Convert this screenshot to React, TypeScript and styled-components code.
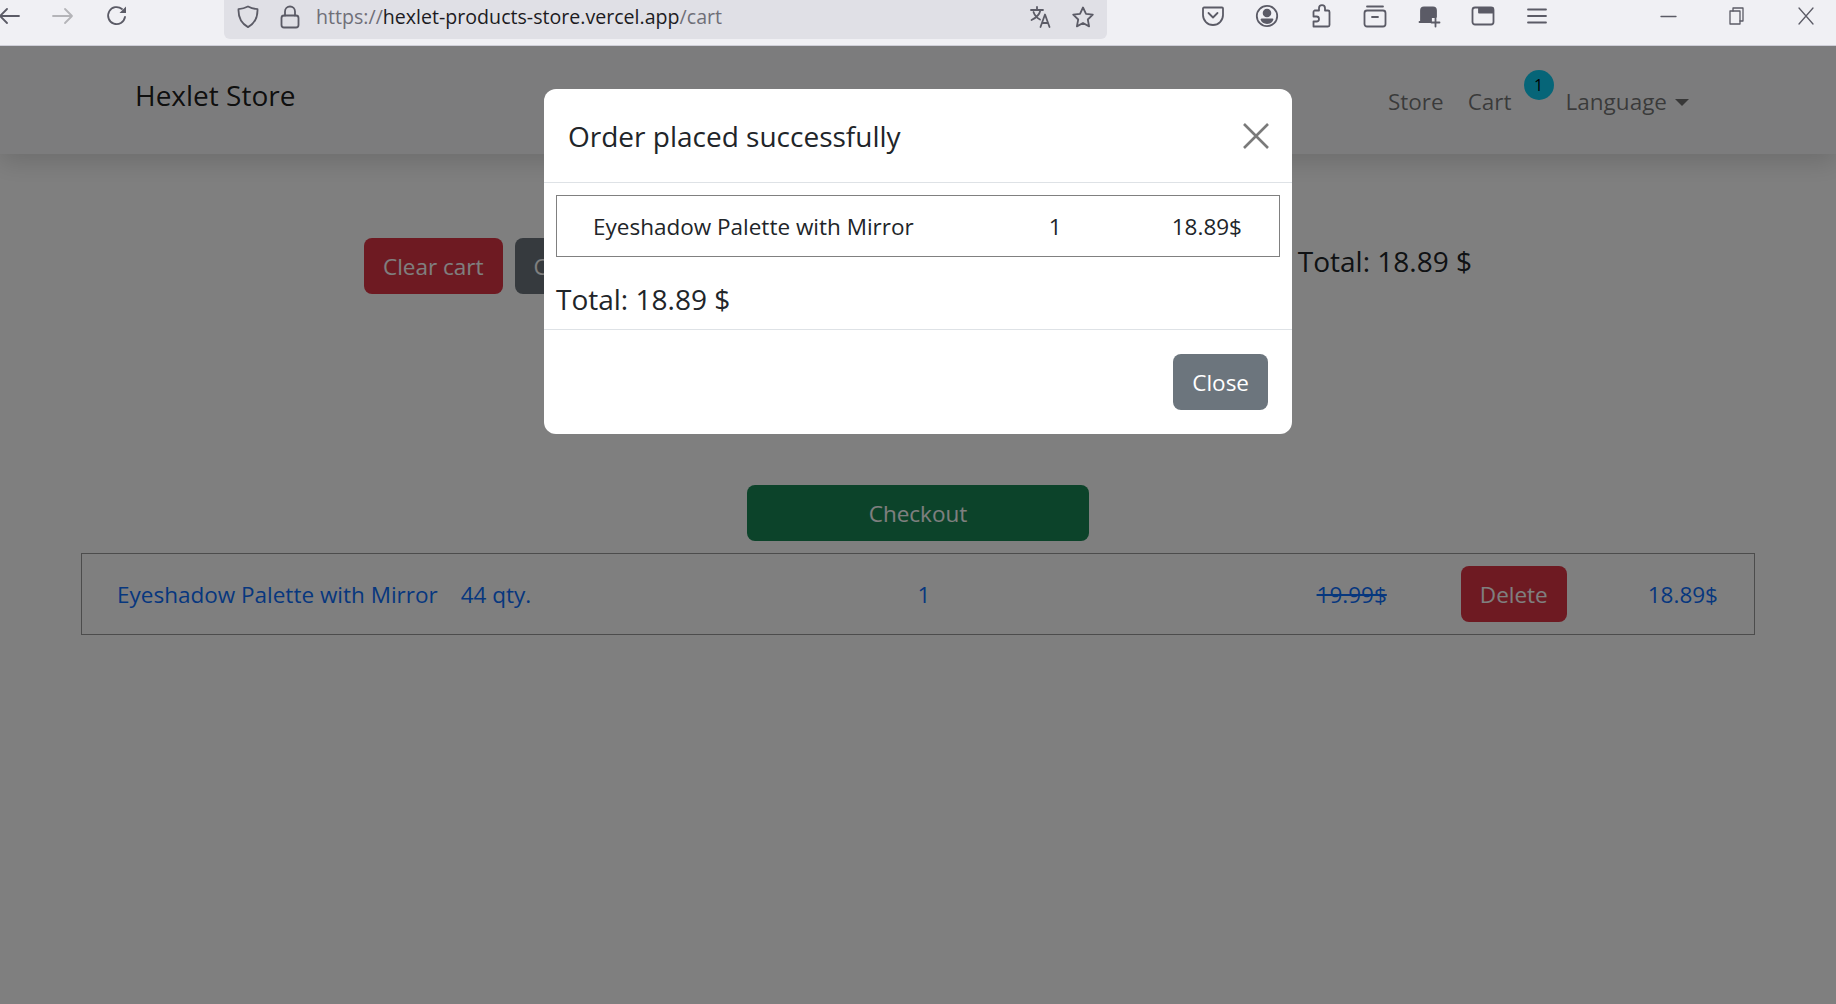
import React from 'react';
import styled, { createGlobalStyle } from 'styled-components';

const GlobalStyle = createGlobalStyle`
  html, body {
    margin: 0;
    height: 100%;
    overflow: hidden;
  }
  body {
    font-family: "Open Sans", "Noto Sans", "Liberation Sans", sans-serif;
    font-size: 22.5px;
    color: #212529;
    background: #fff;
  }
  * { box-sizing: border-box; }
`;

const Screen = styled.div`
  display: flex;
  flex-direction: column;
  height: 1004px;
`;

/* browser chrome */
const Toolbar = styled.div`
  display: flex;
  align-items: flex-start;
  height: 46px;
  flex-shrink: 0;
  background: #f0f0f4;
  border-bottom: 1px solid #cfcfd8;
`;

const NavIcons = styled.div`
  display: flex;
  gap: 30px;
  margin: 4px 95px 0 -3px;
`;

const UrlBar = styled.div`
  display: flex;
  align-items: center;
  width: 883px;
  height: 39px;
  padding: 0 12px 6px;
  background: #e0e0e6;
  border-radius: 0 0 6px 6px;
  flex-shrink: 0;
`;

const UrlIcons = styled.div`
  display: flex;
  gap: 18px;
  margin-left: ${(p: { $push?: boolean }) => (p.$push ? 'auto' : '0')};
`;

const UrlText = styled.div`
  margin-left: 14px;
  font-size: 19.6px;
  color: #6f6f78;
  white-space: nowrap;

  b {
    font-weight: 400;
    color: #1c1b22;
  }
`;

const ToolIcons = styled.div`
  display: flex;
  gap: 30px;
  margin: 4px 107px 0 94px;
`;

const WindowIcons = styled.div`
  display: flex;
  gap: 45px;
  margin-top: 4px;
`;

const IconSvg = styled.svg`
  display: block;
  width: 24px;
  height: 24px;
  fill: none;
  stroke: ${(p: { $faded?: boolean }) => (p.$faded ? '#b4b4b8' : '#5b5b66')};
  stroke-width: 1.8;
  stroke-linecap: round;
  stroke-linejoin: round;
`;

/* page */
const Viewport = styled.div`
  position: relative;
  flex: 1;
  overflow: hidden;
  background: #fff;
`;

const Navbar = styled.nav`
  display: flex;
  align-items: center;
  height: 108px;
  padding: 0 147px 0 135px;
  background: #f8f9fa;
  box-shadow: 0 8px 24px rgba(0, 0, 0, 0.15);
`;

const Brand = styled.a`
  font-size: 28px;
  color: rgba(0, 0, 0, 0.9);
  margin-top: -10px;
`;

const NavLinks = styled.div`
  display: flex;
  align-items: center;
  margin-left: auto;
  margin-top: 2px;
  color: rgba(0, 0, 0, 0.55);
`;

const NavLink = styled.a<{ $gap: number }>`
  margin-right: ${(p) => p.$gap}px;
`;

const Badge = styled.span`
  position: relative;
  top: -16px;
  display: flex;
  align-items: center;
  justify-content: center;
  width: 30px;
  height: 30px;
  margin-right: 12px;
  border-radius: 50%;
  background: #0dcaf0;
  color: #000;
  font-size: 16px;
`;

const Caret = styled.span`
  display: inline-block;
  margin-left: 8px;
  vertical-align: 4px;
  border-top: 7px solid currentColor;
  border-left: 7px solid transparent;
  border-right: 7px solid transparent;
`;

const Content = styled.main`
  display: flex;
  flex-direction: column;
  align-items: center;
  padding-top: 84px;
`;

const Actions = styled.div`
  display: flex;
  align-items: flex-start;
  width: 1108px;
  gap: 12px;
  margin-bottom: 191px;
`;

const Button = styled.button<{ $tone: 'danger' | 'secondary' | 'success' }>`
  height: 56px;
  padding: 0 19px;
  border: 0;
  border-radius: 8px;
  font: inherit;
  color: #fff;
  background: ${(p) =>
    p.$tone === 'danger' ? '#dc3545' : p.$tone === 'success' ? '#198754' : '#6c757d'};
`;

const CheckoutButton = styled(Button)`
  width: 342px;
  margin-bottom: 12px;
`;

const ActionsTotal = styled.div`
  margin-left: auto;
  margin-top: 4px;
  font-size: 28px;
`;

const CartRow = styled.div`
  display: flex;
  align-items: center;
  justify-content: space-between;
  width: 1674px;
  height: 82px;
  padding: 0 36px 0 35px;
  border: 1px solid #999;
  color: #0d6efd;
`;

const ItemName = styled.div`
  display: flex;
  gap: 23px;
`;

const RowEnd = styled.div`
  display: flex;
  align-items: center;
  gap: 74px;
`;

const OldPrice = styled.s``;

const Price = styled.div`
  margin-left: 7px;
`;

/* modal */
const Backdrop = styled.div`
  position: absolute;
  inset: 0;
  background: rgba(0, 0, 0, 0.5);
`;

const Modal = styled.div`
  position: absolute;
  top: 43px;
  left: 544px;
  width: 748px;
  background: #fff;
  border-radius: 12px;
`;

const ModalHeader = styled.div`
  display: flex;
  align-items: center;
  justify-content: space-between;
  height: 94px;
  padding: 0 22px 0 24px;
  border-bottom: 1px solid #dee2e6;
`;

const ModalTitle = styled.div`
  font-size: 28px;
`;

const CloseIcon = styled.svg`
  width: 28px;
  height: 28px;
  fill: none;
  stroke: #7a7a7a;
  stroke-width: 2.6;
`;

const ModalBody = styled.div`
  padding: 12px 12px 0;
`;

const OrderRow = styled.div`
  display: grid;
  grid-template-columns: 1fr 123px auto;
  align-items: center;
  height: 62px;
  padding: 0 37px 0 36px;
  border: 1px solid #808080;
`;

const OrderTotal = styled.div`
  height: 72px;
  padding-top: 23px;
  font-size: 28px;
`;

const ModalFooter = styled.div`
  display: flex;
  justify-content: flex-end;
  padding: 24px;
  border-top: 1px solid #dee2e6;
`;

const Icon = ({ children, faded }: { children: React.ReactNode; faded?: boolean }) => (
  <IconSvg viewBox="0 0 24 24" $faded={faded}>
    {children}
  </IconSvg>
);

export default function App() {
  return (
    <>
      <GlobalStyle />
      <Screen>
        <Toolbar>
          <NavIcons>
            <Icon><path d="M22 12H3M10 5l-7 7 7 7" /></Icon>
            <Icon faded><path d="M2 12h19M14 5l7 7-7 7" /></Icon>
            <Icon>
              <path d="M20 13a8.5 8.5 0 1 1-3-8" />
              <path d="M21 2.5V9h-6.5z" fill="#5b5b66" stroke="none" />
            </Icon>
          </NavIcons>
          <UrlBar>
            <UrlIcons>
              <Icon><path d="M12 1.500c3 1.600 6 2.400 9.500 2.600.3 8-2.400 14-9.500 18C4.900 18.100 2.200 12.100 2.500 4.100c3.500-.2 6.500-1 9.500-2.600z" /></Icon>
              <Icon>
                <rect x="3.500" y="10.500" width="17" height="12" rx="2.500" />
                <path d="M7 10.500V6.500a5 5 0 0 1 10 0v4" />
              </Icon>
            </UrlIcons>
            <UrlText>https://<b>hexlet-products-store.vercel.app</b>/cart</UrlText>
            <UrlIcons $push>
              <Icon>
                <path d="M2 5h12M8 2v3M11.500 5C10.500 9.500 7 13 2.500 15M4.500 7c1 3 3.500 6 6.500 7.500" />
                <path d="M11.500 22l4.500-12.500L20.500 22M13 18h6" />
              </Icon>
              <Icon><path d="M12 2.500l3 6.300 6.800.9-5 4.800 1.300 6.900-6.100-3.400-6.100 3.400 1.300-6.900-5-4.800 6.800-.9z" /></Icon>
            </UrlIcons>
          </UrlBar>
          <ToolIcons>
            <Icon>
              <path d="M3 3.500h18a1 1 0 0 1 1 1V11a10 10 0 0 1-20 0V4.500a1 1 0 0 1 1-1z" />
              <path d="M7.500 9L12 13.500 16.500 9" />
            </Icon>
            <Icon>
              <circle cx="12" cy="12" r="10.200" />
              <circle cx="12" cy="9" r="3.400" fill="#5b5b66" />
              <path d="M6.500 15.500h11c-.8 2.500-3 3.500-5.500 3.500s-4.700-1-5.500-3.500z" fill="#5b5b66" />
            </Icon>
            <Icon>
              <path d="M5.500 6.500h4.500V4.200a3 3 0 0 1 6 0v2.300h3a1.500 1.500 0 0 1 1.500 1.500v13a1.500 1.500 0 0 1-1.500 1.500H4.500v-5h3a2.500 2.500 0 0 0 0-5h-3V8a1.500 1.500 0 0 1 1-1.500z" />
            </Icon>
            <Icon>
              <rect x="1.500" y="6.500" width="21" height="16" rx="2.500" />
              <path d="M4 2.500h16M9 13h6" />
            </Icon>
            <Icon>
              <path d="M4 17V6.500A3 3 0 0 1 7 3.500h9a3 3 0 0 1 3 3V13h-5v5H2.500z" fill="#5b5b66" />
              <path d="M18.500 14.500v8M14.500 18.500h8" />
            </Icon>
            <Icon>
              <rect x="1.500" y="3.500" width="21" height="17" rx="2.500" />
              <path d="M8 4h13.500v4.500H8z" fill="#5b5b66" />
            </Icon>
            <Icon><path d="M3 5.500h18M3 12h18M3 18.500h18" /></Icon>
          </ToolIcons>
          <WindowIcons>
            <Icon><path d="M5 12.500h15" strokeWidth="1.300" /></Icon>
            <Icon>
              <rect x="5" y="7" width="10" height="13" strokeWidth="1.300" />
              <path d="M8 7V4h10v13h-3" strokeWidth="1.300" />
            </Icon>
            <Icon><path d="M5 4l14 16M19 4L5 20" strokeWidth="1.300" /></Icon>
          </WindowIcons>
        </Toolbar>
        <Viewport>
          <Navbar>
            <Brand>Hexlet Store</Brand>
            <NavLinks>
              <NavLink $gap={24}>Store</NavLink>
              <NavLink $gap={12}>Cart</NavLink>
              <Badge>1</Badge>
              <NavLink $gap={0}>
                Language
                <Caret />
              </NavLink>
            </NavLinks>
          </Navbar>
          <Content>
            <Actions>
              <Button $tone="danger">Clear cart</Button>
              <Button $tone="secondary">Continue shopping</Button>
              <ActionsTotal>Total: 18.89 $</ActionsTotal>
            </Actions>
            <CheckoutButton $tone="success">Checkout</CheckoutButton>
            <CartRow>
              <ItemName>
                <span>Eyeshadow Palette with Mirror</span>
                <span>44 qty.</span>
              </ItemName>
              <div>1</div>
              <RowEnd>
                <OldPrice>19.99$</OldPrice>
                <Button $tone="danger">Delete</Button>
                <Price>18.89$</Price>
              </RowEnd>
            </CartRow>
          </Content>
          <Backdrop />
          <Modal>
            <ModalHeader>
              <ModalTitle>Order placed successfully</ModalTitle>
              <CloseIcon viewBox="0 0 28 28">
                <path d="M2 2l24 24M26 2L2 26" />
              </CloseIcon>
            </ModalHeader>
            <ModalBody>
              <OrderRow>
                <span>Eyeshadow Palette with Mirror</span>
                <span>1</span>
                <span>18.89$</span>
              </OrderRow>
              <OrderTotal>Total: 18.89 $</OrderTotal>
            </ModalBody>
            <ModalFooter>
              <Button $tone="secondary">Close</Button>
            </ModalFooter>
          </Modal>
        </Viewport>
      </Screen>
    </>
  );
}
